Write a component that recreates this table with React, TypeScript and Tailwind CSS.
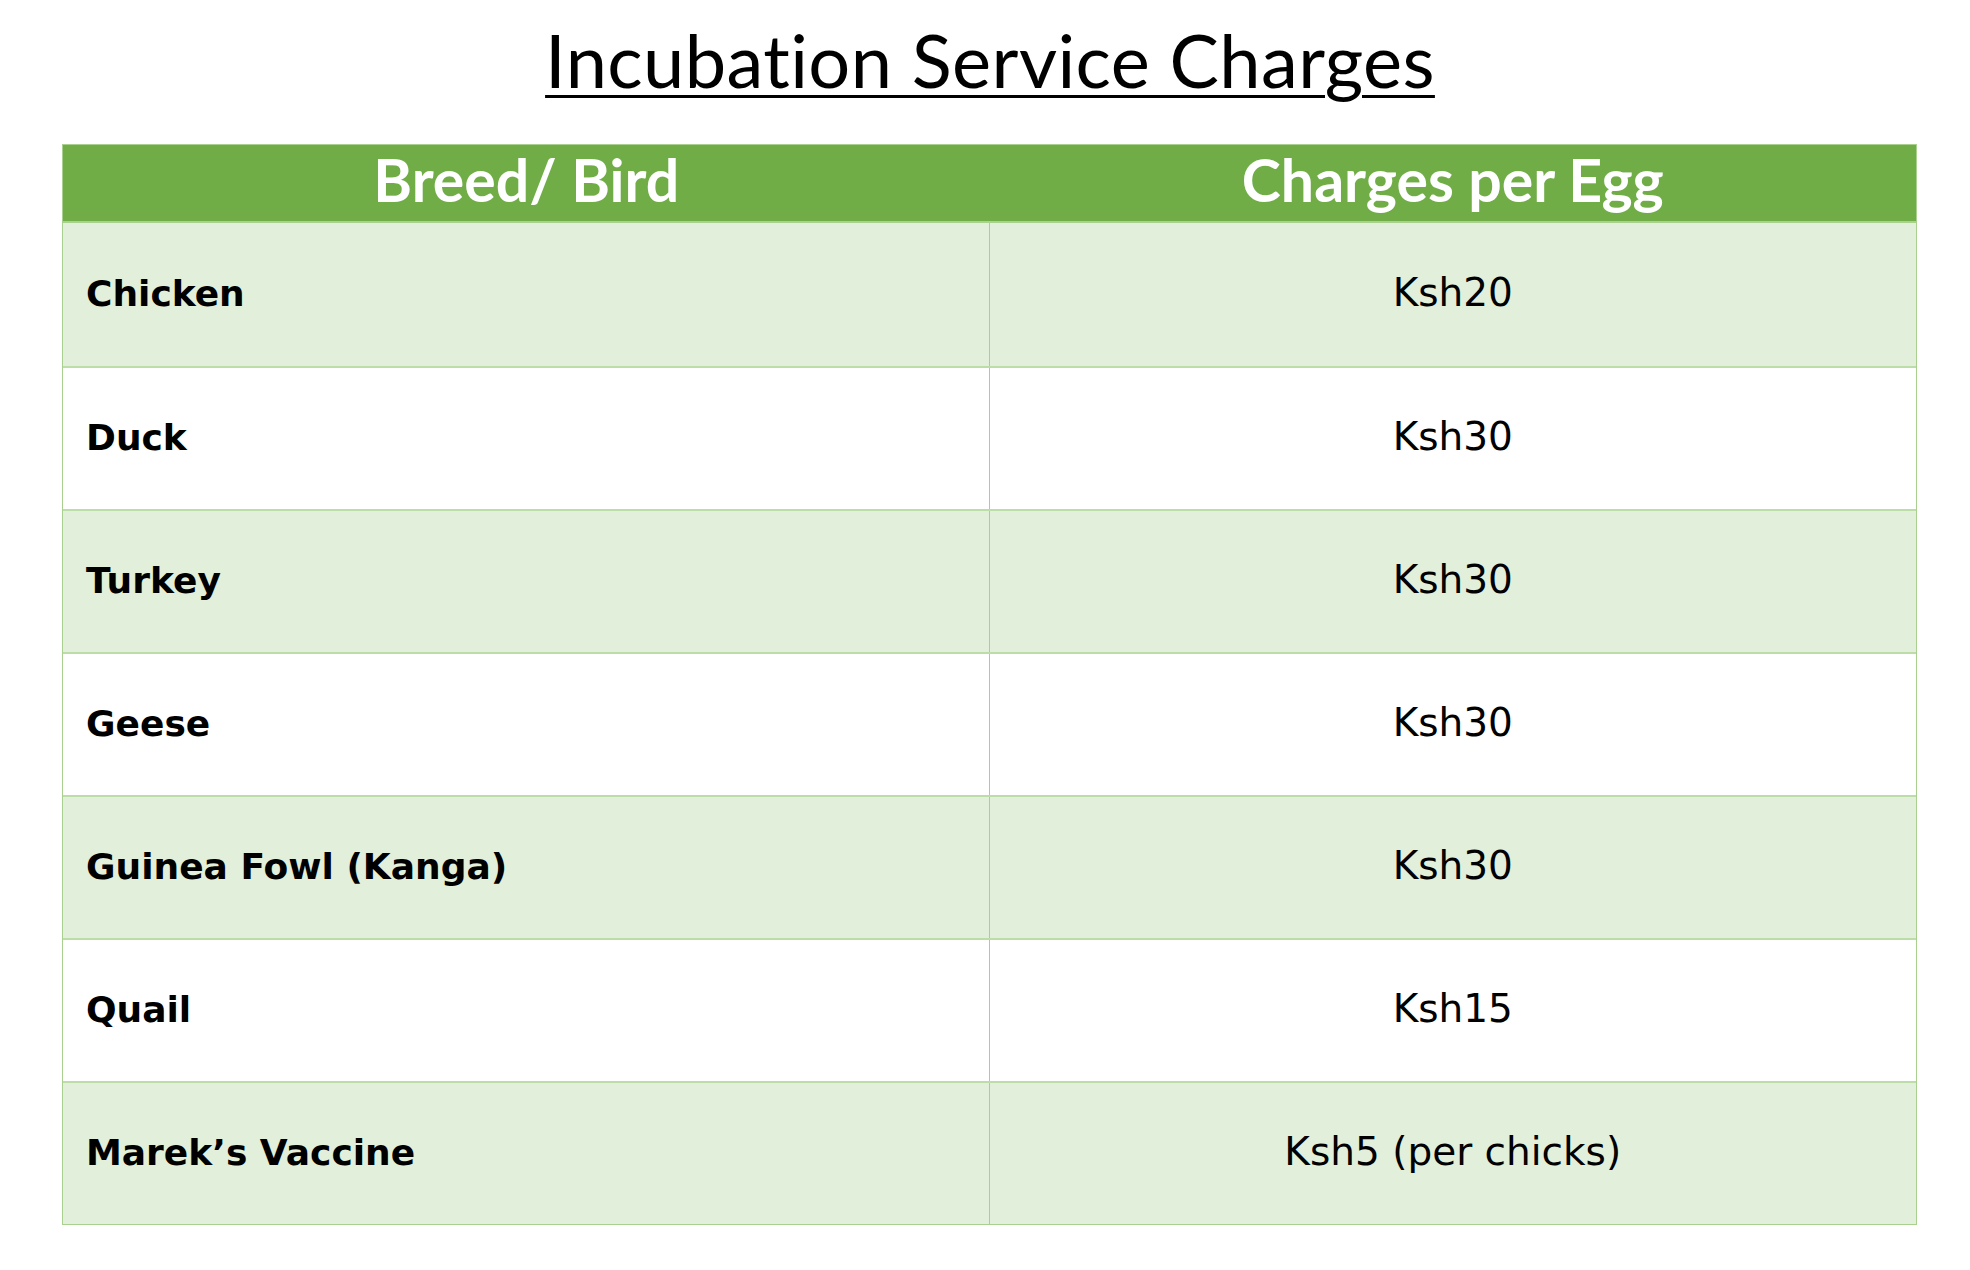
const rows = [
  { bird: "Chicken", charge: "Ksh20" },
  { bird: "Duck", charge: "Ksh30" },
  { bird: "Turkey", charge: "Ksh30" },
  { bird: "Geese", charge: "Ksh30" },
  { bird: "Guinea Fowl (Kanga)", charge: "Ksh30" },
  { bird: "Quail", charge: "Ksh15" },
  { bird: "Marek’s Vaccine", charge: "Ksh5 (per chicks)" },
];

export default function App() {
  return (
    <div className="min-h-screen w-full bg-white pt-[23px]">
      <div className="flex justify-center pl-[10px]">
        <h1 className="font-['Lato',sans-serif] text-[74px] leading-none tracking-[0.4px] text-black underline decoration-[3px] underline-offset-[7px] [font-variant-ligatures:none]">
          Incubation Service Charges
        </h1>
      </div>

      <div className="ml-[62px] mt-[47px] w-[1855px] border border-[#a9d08e]">
        {/* header */}
        <div className="grid h-[78px] grid-cols-2 border-b-2 border-[#a9d08e] bg-[#70ad47] font-['Lato',sans-serif] text-[59px] leading-none font-bold text-white [font-variant-ligatures:none]">
          <div className="flex items-center justify-center pb-[8px]">Breed/ Bird</div>
          <div className="flex items-center justify-center pb-[8px]">Charges per Egg</div>
        </div>

        {rows.map((row, i) => (
          <div
            key={row.bird}
            className={
              "grid h-[143px] grid-cols-2 " +
              (i > 0 ? "border-t-2 border-[#bcdca8] " : "") +
              (i % 2 === 0 ? "bg-[#e2efda]" : "bg-white")
            }
          >
            <div className="flex items-center border-r border-[#a9d08e] pb-[2px] pl-[23px] font-['DejaVu_Sans',sans-serif] text-[36px] font-bold text-black">
              {row.bird}
            </div>
            <div className="flex items-center justify-center pb-[2px] font-['DejaVu_Sans',sans-serif] text-[39px] text-black">
              {row.charge}
            </div>
          </div>
        ))}
      </div>
    </div>
  );
}
